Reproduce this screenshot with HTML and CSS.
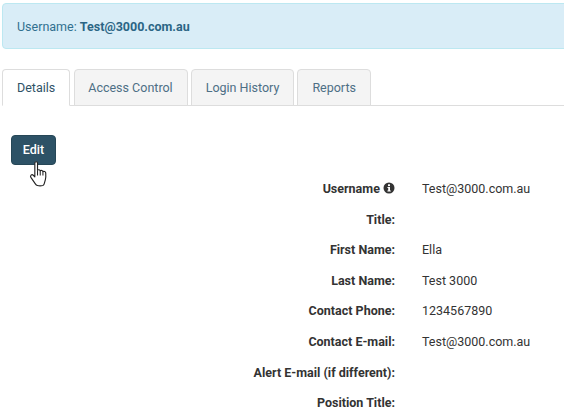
FILE: index.html
```html
<!DOCTYPE html>
<html lang="en">
<head>
<meta charset="utf-8">
<title>User details</title>
<link rel="stylesheet" href="styles.css">
</head>
<body>
<div class="page">
  <div class="alert">Username: <strong>Test@3000.com.au</strong></div>
  <ul class="tabs">
    <li class="tab active">Details</li>
    <li class="tab">Access Control</li>
    <li class="tab">Login History</li>
    <li class="tab">Reports</li>
  </ul>
  <div class="panel">
    <div class="actions">
      <button class="btn" type="button">Edit</button>
      <svg class="cursor" width="21" height="27" viewBox="0 0 20 26">
        <path d="M5.500 2c0-1.700 2.600-1.700 2.600 0v6.800c.8-.7 2.300-.5 2.600.6.900-.6 2.300-.3 2.600.8 1-.5 2.500 0 2.700 1.300.2 2.300.1 4.700-.4 6.600l-1.100 3.900c-.2.800-.6 1.400-1.300 1.600-1.600.4-3.700.4-5.200 0-.9-.2-1.500-.8-2-1.600l-4.300-6.200c-1.100-1.700.9-3.400 2.300-2.100l1.500 1.500z" fill="#fff" stroke="#222" stroke-width="1.100" stroke-linejoin="round"/>
        <path d="M8.100 8.800v5.200M10.700 9.400v4.600M13.300 10.200v3.800" fill="none" stroke="#222" stroke-width="1"/>
      </svg>
    </div>
    <dl class="details">
      <div class="row"><dt>Username <svg class="info" width="12" height="12" viewBox="0 0 12 12"><circle cx="6" cy="6" r="5.500" fill="#333"/><rect x="5" y="2.300" width="2" height="1.800" fill="#fff"/><path d="M4.400 5h2.600v3.600h.8v1H4.400v-1h.8V6h-.8z" fill="#fff"/></svg></dt><dd>Test@3000.com.au</dd></div>
      <div class="row"><dt>Title:</dt><dd></dd></div>
      <div class="row"><dt>First Name:</dt><dd>Ella</dd></div>
      <div class="row"><dt>Last Name:</dt><dd>Test 3000</dd></div>
      <div class="row"><dt>Contact Phone:</dt><dd>1234567890</dd></div>
      <div class="row"><dt>Contact E-mail:</dt><dd>Test@3000.com.au</dd></div>
      <div class="row"><dt>Alert E-mail (if different):</dt><dd></dd></div>
      <div class="row"><dt>Position Title:</dt><dd></dd></div>
    </dl>
  </div>
</div>
</body>
</html>
```

FILE: styles.css
```css
html, body {
  margin: 0;
  padding: 0;
  height: 100%;
  overflow: hidden;
  background: #fff;
}
body {
  font-family: Roboto, "Liberation Sans", sans-serif;
  font-size: 12.5px;
  line-height: 18px;
  color: #333;
}
.page {
  padding: 3px 0 0 2px;
}
.alert {
  height: 46px;
  box-sizing: border-box;
  margin-right: -10px;
  padding: 14px;
  background: #d9edf7;
  border: 1px solid #bce8f1;
  border-radius: 4px;
  color: #31708f;
}
.alert strong {
  font-weight: 700;
  color: #2b6585;
}
.tabs {
  display: flex;
  gap: 3px;
  margin: 20px -2px 0 0;
  padding: 0;
  list-style: none;
  border-bottom: 1px solid #ddd;
  height: 36px;
}
.tab {
  box-sizing: border-box;
  height: 37px;
  padding: 9px 14px;
  border: 1px solid #ddd;
  border-radius: 4px 4px 0 0;
  background: #f4f4f4;
  color: #4d6f85;
}
.tab.active {
  background: #fff;
  border-bottom-color: #fff;
  color: #2f5266;
}
.tab.active + .tab {
  margin-left: 0.4px;
  padding-left: 13.6px;
}
.panel {
  padding: 29px 0 0 9px;
}
.actions {
  position: relative;
  height: 30px;
}
.btn {
  display: block;
  width: 45px;
  height: 30px;
  padding: 0;
  font: 500 12.5px/18px Roboto, "Liberation Sans", sans-serif;
  color: #fff;
  background: #2d5266;
  border: 1px solid #264757;
  border-radius: 4px;
}
.cursor {
  position: absolute;
  left: 18px;
  top: 26px;
}
.details {
  margin: 8.800px 0 0;
}
.row {
  display: flex;
  gap: 27px;
  height: 30.6px;
  align-items: center;
}
dt {
  width: 384px;
  text-align: right;
  font-weight: 700;
}
dd {
  margin: 0;
}
.info {
  vertical-align: -1px;
}
```
